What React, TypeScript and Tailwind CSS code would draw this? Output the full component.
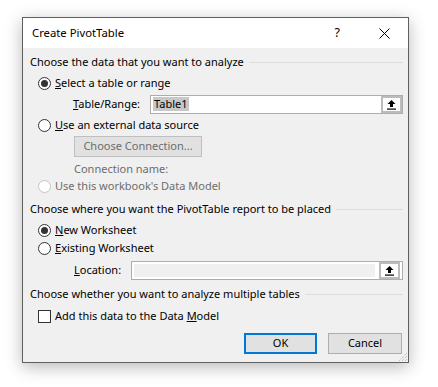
import React from 'react';

const font = { fontFamily: '"Noto Sans", "Open Sans", sans-serif' };

const Radio: React.FC<{ checked?: boolean; disabled?: boolean }> = ({ checked, disabled }) => (
  <span
    className={`flex h-[13px] w-[13px] shrink-0 items-center justify-center rounded-full border bg-white ${
      disabled ? 'border-[#c4c4c4]' : 'border-[#333333]'
    }`}
  >
    {checked && <span className="h-[7px] w-[7px] rounded-full bg-[#333333]" />}
  </span>
);

const CollapseIcon: React.FC = () => (
  <svg width="11" height="11" viewBox="0 0 11 11">
    <path d="M5.5 1 L9.5 5 L7 5 L7 8 L4 8 L4 5 L1.5 5 Z" fill="#000" />
    <rect x="1" y="9.5" width="9" height="1.2" fill="#000" />
  </svg>
);

const SectionHeader: React.FC<{ children: React.ReactNode; mt: string }> = ({ children, mt }) => (
  <div className={`flex h-[18px] items-center pr-[5px] ${mt}`}>
    <span className="whitespace-nowrap">{children}</span>
    <span className="ml-[5px] h-px flex-1 bg-[#dcdcdc]" />
  </div>
);

export default function App() {
  return (
    <div className="min-h-[387px] w-[438px] bg-white pl-[22px] pt-[17px] text-[11px] text-black" style={font}>
      <div className="relative flex w-[387px] flex-col border border-[#5f5f5f] bg-[#f0f0f0] shadow-[0_4px_16px_rgba(0,0,0,0.28)]">
        {/* title bar */}
        <div className="flex h-[30px] items-center bg-white pl-[9px]">
          <span className="flex-1 text-[11.3px]">Create PivotTable</span>
          <span className="mr-[39px] text-[12.5px]">?</span>
          <svg width="11" height="11" viewBox="0 0 11 11" className="mr-[18px]">
            <path d="M0.5 0.5 L10.5 10.5 M10.5 0.5 L0.5 10.5" stroke="#000" strokeWidth="1" />
          </svg>
        </div>

        <div className="flex flex-col pb-[8px] pl-[7px]">
          <SectionHeader mt="mt-[5px]">Choose the data that you want to analyze</SectionHeader>

          <div className="ml-[8px] mt-[3px] flex h-[18px] items-center gap-[4px]">
            <Radio checked />
            <span>
              <u>S</u>elect a table or range
            </span>
          </div>

          <div className="ml-[43px] mt-[3px] flex h-[18px] items-center pr-[5px]">
            <span className="w-[77px]">
              <u>T</u>able/Range:
            </span>
            <div className="flex h-[19px] flex-1 items-center border border-[#adadad] bg-white">
              <span className="ml-[2px] bg-[#c8c8c8] px-[1px] leading-[14px]">Table1</span>
              <span className="flex-1" />
              <span className="flex h-[17px] w-[21px] items-center justify-center border-2 border-[#bcbcbc] bg-white">
                <CollapseIcon />
              </span>
            </div>
          </div>

          <div className="ml-[8px] mt-[3px] flex h-[18px] items-center gap-[4px]">
            <Radio />
            <span>
              <u>U</u>se an external data source
            </span>
          </div>

          <div className="ml-[44px] mt-[2px] flex">
            <div className="flex h-[21px] w-[128px] items-center justify-center border border-[#bfbfbf] bg-[#e1e1e1] text-[#6d6d6d]">
              Choose Connection...
            </div>
          </div>

          <div className="ml-[44px] mt-[4px] flex h-[16px] items-center text-[#6d6d6d]">Connection name:</div>

          <div className="ml-[8px] mt-[1px] flex h-[16px] items-center gap-[4px] text-[#6d6d6d]">
            <Radio disabled />
            <span>Use this workbook's Data Model</span>
          </div>

          <SectionHeader mt="mt-[6px]">Choose where you want the PivotTable report to be placed</SectionHeader>

          <div className="ml-[8px] mt-[3px] flex h-[18px] items-center gap-[4px]">
            <Radio checked />
            <span>
              <u>N</u>ew Worksheet
            </span>
          </div>

          <div className="ml-[8px] flex h-[18px] items-center gap-[4px]">
            <Radio />
            <span>
              <u>E</u>xisting Worksheet
            </span>
          </div>

          <div className="ml-[44px] mt-[4px] flex h-[18px] items-center pr-[5px]">
            <span className="w-[57px]">
              <u>L</u>ocation:
            </span>
            <div className="flex h-[19px] flex-1 items-center border border-[#adadad] bg-white p-[2px]">
              <span className="h-full flex-1 bg-[#f0f0f0]" />
              <span className="ml-[4px] flex h-[17px] w-[21px] items-center justify-center border-2 border-[#bcbcbc] bg-white">
                <CollapseIcon />
              </span>
            </div>
          </div>

          <SectionHeader mt="mt-[6px]">Choose whether you want to analyze multiple tables</SectionHeader>

          <div className="ml-[8px] mt-[4px] flex h-[18px] items-center gap-[4px]">
            <span className="h-[13px] w-[13px] border border-[#333333] bg-white" />
            <span>
              Add this data to the Data <u>M</u>odel
            </span>
          </div>

          <div className="mt-[8px] flex justify-end gap-[11px] pr-[6px]">
            <div className="flex h-[21px] w-[73px] items-center justify-center border-2 border-[#0078d7] bg-[#e1e1e1]">
              OK
            </div>
            <div className="flex h-[21px] w-[74px] items-center justify-center border border-[#adadad] bg-[#e1e1e1]">
              Cancel
            </div>
          </div>
        </div>

        <svg width="12" height="12" viewBox="0 0 12 12" className="absolute bottom-0 right-0">
          <path d="M11 3 L3 11 M11 6 L6 11 M11 9 L9 11" stroke="#b0b0b0" strokeWidth="1" strokeDasharray="1 1" />
        </svg>
      </div>
    </div>
  );
}
